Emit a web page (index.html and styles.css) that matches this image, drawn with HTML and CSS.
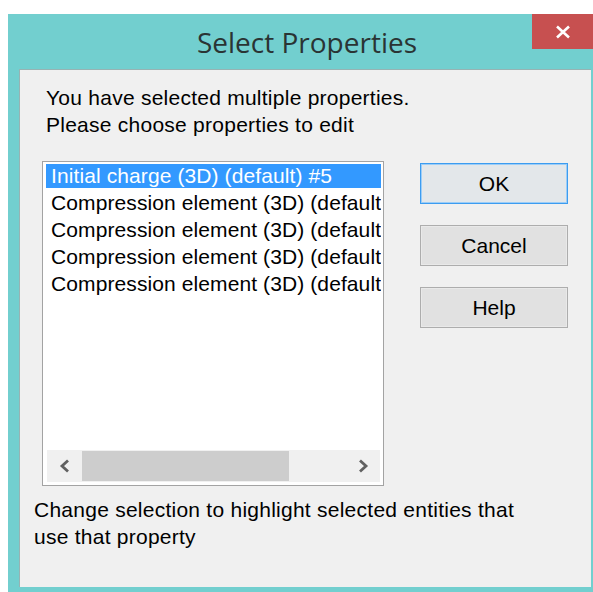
FILE: index.html
```html
<!DOCTYPE html>
<html lang="en">
<head>
<meta charset="utf-8">
<title>Select Properties</title>
<link rel="stylesheet" href="styles.css">
</head>
<body>
<div class="frame">
  <div class="titlebar">
    <div class="title">Select Properties</div>
    <div class="close">
      <svg width="16" height="14" viewBox="0 0 16 14"><path d="M2 1.5 L14 12.5 M14 1.5 L2 12.5" stroke="#fff" stroke-width="2.6" fill="none"/></svg>
    </div>
  </div>
  <div class="client">
    <p class="intro">You have selected multiple properties.<br>Please choose properties to edit</p>
    <div class="main">
      <div class="listbox">
        <ul class="items">
          <li class="item selected">Initial charge (3D) (default) #5</li>
          <li class="item">Compression element (3D) (default</li>
          <li class="item">Compression element (3D) (default</li>
          <li class="item">Compression element (3D) (default</li>
          <li class="item">Compression element (3D) (default</li>
        </ul>
        <div class="hscroll">
          <div class="arrow">
            <svg width="14" height="14" viewBox="0 0 14 14"><path d="M10 1.5 L4 7 L10 12.5" stroke="#606060" stroke-width="2.8" fill="none"/></svg>
          </div>
          <div class="thumb"></div>
          <div class="track"></div>
          <div class="arrow">
            <svg width="14" height="14" viewBox="0 0 14 14"><path d="M4 1.5 L10 7 L4 12.5" stroke="#606060" stroke-width="2.8" fill="none"/></svg>
          </div>
        </div>
      </div>
      <div class="buttons">
        <button class="btn default">OK</button>
        <button class="btn">Cancel</button>
        <button class="btn">Help</button>
      </div>
    </div>
    <p class="hint">Change selection to highlight selected entities that<br>use that property</p>
  </div>
</div>
</body>
</html>
```
FILE: styles.css
```css
html, body {
  margin: 0;
  padding: 0;
  background: #ffffff;
  height: 592px;
  overflow: hidden;
}

.frame {
  margin: 14px 0 0 8px;
  height: 578px;
  background: #72cfcf;
  display: flex;
  flex-direction: column;
}

.titlebar {
  height: 55px;
  display: flex;
  flex-shrink: 0;
}

.title {
  flex: 1;
  padding-left: 74px;
  text-align: center;
  font-family: "Open Sans", "Noto Sans", sans-serif;
  font-size: 28px;
  line-height: 56px;
  color: #2a3434;
}

.close {
  width: 61px;
  height: 35px;
  background: #c75050;
  display: flex;
  align-items: center;
  justify-content: center;
}

.client {
  flex: 1;
  margin: 0 2px 5px 11px;
  background: #f0f0f0;
  border-top: 1px solid #97b3b3;
  border-left: 1px solid #97b3b3;
  padding: 14px 0 0 14px;
  font-family: "Liberation Sans", Arial, sans-serif;
  font-size: 21px;
  letter-spacing: 0.25px;
  color: #000;
}

.intro {
  margin: 0 0 0 12px;
  line-height: 27px;
}

.main {
  display: flex;
  margin: 23px 0 0 8px;
}

.listbox {
  box-sizing: border-box;
  width: 342px;
  height: 325px;
  border: 1px solid #a3a3a3;
  padding: 2px 2px 3px 3px;
  background: #ffffff;
  display: flex;
  flex-direction: column;
}

.items {
  list-style: none;
  margin: 0;
  padding: 0;
  flex: 1;
}

.item {
  height: 24px;
  line-height: 24px;
  margin-bottom: 3px;
  padding-left: 5px;
  letter-spacing: 0.1px;
  white-space: nowrap;
  overflow: hidden;
}

.item.selected {
  background: #3399ff;
  color: #ffffff;
}

.hscroll {
  height: 32px;
  margin: 0 1px;
  display: flex;
  background: #f0f0f0;
}

.arrow {
  width: 35px;
  display: flex;
  align-items: center;
  justify-content: center;
}

.thumb {
  width: 207px;
  margin: 1px 0;
  background: #cdcdcd;
}

.track {
  flex: 1;
}

.buttons {
  margin: 2px 0 0 36px;
  display: flex;
  flex-direction: column;
  gap: 21px;
}

.btn {
  box-sizing: border-box;
  width: 148px;
  height: 41px;
  border: 1px solid #adadad;
  box-shadow: inset 0 0 0 1px #e9e9e9;
  background: #e1e1e1;
  font-family: "Liberation Sans", Arial, sans-serif;
  font-size: 21px;
  color: #000;
  padding: 0;
}

.btn.default {
  border-color: #3c9cf0;
  box-shadow: inset 0 0 0 1px #9ccdf7;
  background: #e3e7ea;
}

.hint {
  margin: 10px 0 0 0;
  line-height: 27px;
}
```
